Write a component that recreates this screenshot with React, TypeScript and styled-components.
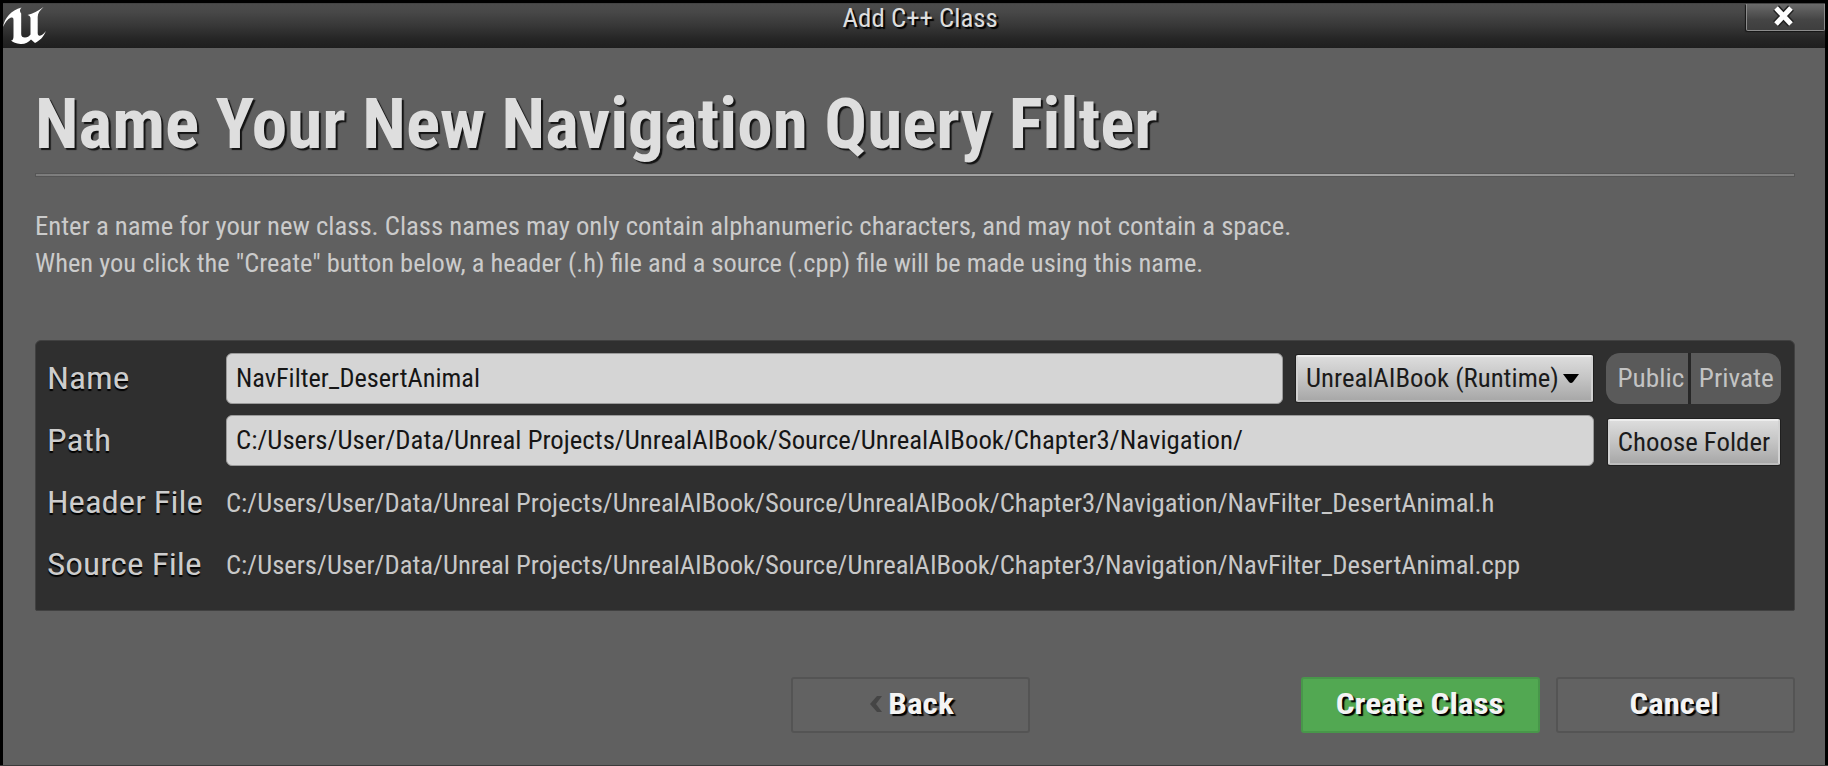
import React from "react";
import styled, { createGlobalStyle, css } from "styled-components";

const GlobalStyle = createGlobalStyle`
  *, *::before, *::after { box-sizing: border-box; }
  html, body { margin: 0; padding: 0; background: #000; }
  body { font-family: "Roboto Condensed", Roboto, "Liberation Sans", sans-serif; font-stretch: 75%; }
  button { font: inherit; margin: 0; }
`;

/* Widens the condensed face a little without changing its height. */
const Wide = styled.span<{ $by: number; $from?: string }>`
  display: inline-block;
  white-space: nowrap;
  transform: scaleX(${(p) => p.$by});
  transform-origin: ${(p) => p.$from ?? "left"} center;
`;

const Frame = styled.div`
  width: 1828px;
  height: 766px;
  padding: 3px 3px 1px;
  background: #000;
  box-shadow: inset 0 -1px #3b3b3b;
  overflow: hidden;
`;

const Dialog = styled.main`
  height: 762px;
  display: flex;
  flex-direction: column;
  background: #606060;
`;

const TitleBar = styled.header`
  height: 44.5px;
  display: grid;
  grid-template-columns: 79px 1fr 79px;
  align-items: start;
  background: linear-gradient(#4b4b4b 0%, #484848 18%, #373737 50%, #252525 80%, #1e1e1e 100%);
  border-top: 1px solid #434343;
`;

const Logo = styled.svg`
  display: block;
  width: 44px;
  height: 42px;
`;

const WindowTitle = styled.h1`
  margin: 0;
  padding-left: 13px;
  text-align: center;
  font-size: 25px;
  font-weight: 400;
  line-height: 29px;
  color: #dedede;
  text-shadow: 2px 2px 1px #000;
`;

const CloseButton = styled.button`
  height: 27px;
  padding: 0 4px 2px 0;
  display: flex;
  align-items: center;
  justify-content: center;
  border: 1px solid #8c8c8c;
  border-top: 0;
  border-radius: 0 0 2px 2px;
  background: linear-gradient(#6a6a6a, #454545 60%, #3e3e3e);
  box-shadow: -1px 1px 1px #161616;
`;

const Content = styled.div`
  flex: 1;
  display: flex;
  flex-direction: column;
  padding: 37px 30px 0 32px;
`;

const Heading = styled.h2`
  margin: 0;
  padding: 0 0 10px 0;
  font-size: 70px;
  font-weight: 700;
  line-height: 78px;
  color: #dedede;
  white-space: nowrap;
  text-shadow: 2px 2px 1px #141414;
`;

const Divider = styled.hr`
  width: 100%;
  height: 4px;
  margin: 0 0 31px;
  border: 1px solid #555;
  background: linear-gradient(90deg, #7c7c7c, #a4a4a4 25%, #a4a4a4 75%, #7c7c7c);
`;

const Intro = styled.p`
  margin: 0;
  font-size: 25px;
  line-height: 37px;
  color: #cbcbcb;
  white-space: nowrap;
`;

const Panel = styled.section`
  height: 271px;
  margin-top: 58px;
  padding: 12px 13px 0 11px;
  display: grid;
  grid-template-columns: 178.5px 1fr;
  grid-template-rows: repeat(4, 62.3px);
  background: #2f2f2f;
  border: 1px solid #414141;
  border-radius: 6px 6px 2px 2px;
`;

const Label = styled.label`
  font-size: 32px;
  line-height: 50px;
  color: #cdcdcd;
  white-space: nowrap;
  text-shadow: 0 2px 1px #000;
`;

const Field = styled.div`
  height: 51px;
  display: flex;
  align-items: center;
  font-size: 25px;
`;

const TextBox = styled.div`
  flex: 1;
  min-width: 0;
  height: 51px;
  padding: 1px 9px 0;
  display: flex;
  align-items: center;
  border: 1px solid #9a9a9a;
  border-radius: 6px;
  background: #d5d5d5;
  color: #161616;
`;

const FilePath = styled.span`
  padding-top: 1px;
  color: #c8c8c8;
  white-space: nowrap;
`;

const raised = css`
  border: 2px solid #d2d2d2;
  border-top-color: #ededed;
  border-bottom-color: #bdbdbd;
  border-radius: 2px;
  background: linear-gradient(#dcdcdc, #c4c4c4 50%, #a8a8a8) padding-box;
  box-shadow: 0 0 0 1px #1f1f1f;
  color: #1b1b1b;
  white-space: nowrap;
`;

const Combo = styled.button`
  ${raised}
  width: 297px;
  height: 47px;
  margin: 1px 13px 0 13px;
  padding: 0 11px 0 8px;
  display: flex;
  align-items: center;
  justify-content: space-between;
`;

const Choose = styled.button`
  ${raised}
  width: 172px;
  height: 46px;
  margin: 3px 1px 0 14px;
  padding: 1px 0 0;
`;

const Segments = styled.div`
  width: 175px;
  height: 51px;
  display: grid;
  grid-template-columns: 82px 90px;
  column-gap: 3px;
  border-radius: 14px;
  background: #272727;
  overflow: hidden;
`;

const Segment = styled.button`
  border: 0;
  background: #5a5a5a;
  color: #c3c3c3;
  text-align: right;
  padding: 1px 4px 0 0;
  &:last-child { padding-right: 7px; }
`;

const Footer = styled.footer`
  margin-top: 66px;
  display: grid;
  grid-template-columns: 494px 239px 239px;
  column-gap: 16px;
  justify-content: end;
`;

const WizardButton = styled.button<{ $primary?: boolean; $back?: boolean }>`
  height: 56px;
  padding: 0 2px 2px 0;
  border: 2px solid ${(p) => (p.$primary ? "#48974a" : "#545454")};
  border-radius: 3px;
  background: ${(p) => (p.$primary ? "#52a852" : "#626262")};
  color: #f4f4f4;
  font-size: 29.5px;
  font-weight: 700;
  text-shadow: 2px 2px 1px #000;
  display: flex;
  align-items: center;
  justify-content: center;
  gap: 9px;
  margin-right: ${(p) => (p.$back ? "255px" : "0")};
`;

const BackChevron = () => (
  <svg width="14" height="18" viewBox="0 0 14 18" aria-hidden="true">
    <path d="M8 1h5L7 9 13 17H8L1 9Z" fill="#454545" />
  </svg>
);

const SOURCE_DIR = "C:/Users/User/Data/Unreal Projects/UnrealAIBook/Source/UnrealAIBook/Chapter3/Navigation/";
const CLASS_NAME = "NavFilter_DesertAnimal";

export default function App() {
  return (
    <Frame>
      <GlobalStyle />
      <Dialog>
        <TitleBar>
          <Logo viewBox="0 0 44 42" aria-hidden="true">
            <path
              fill="#fff"
              d="M0 23C1.500 14 8 6.500 18.500 3.500C16.500 5.500 16.500 7.500 18.200 9.500V30C18.200 32.500 19.500 33.500 22 33.500C24.500 33.500 26 32.500 27.500 30.500V14.500C27.500 12.500 26.500 11.500 24.500 11C30 9.500 35 7 40.500 3C37 6.500 34.700 9 34.700 13V29C34.700 31.500 36 32 37.500 31.500C39.500 31 41 29.500 42.800 27C41 32.500 37 36.500 32 39L28 35.500C25.500 38 22 40.300 17.500 40C13 39.500 10 38.500 8 36.500C10 36.500 10.500 34.500 10.500 32V16C10.500 13.500 9.500 13 7.500 13.800C4.500 15 2.500 18 0 23Z"
            />
          </Logo>
          <WindowTitle>
            <Wide $by={1.075} $from="center">Add C++ Class</Wide>
          </WindowTitle>
          <CloseButton aria-label="Close">
            <svg width="26" height="24" viewBox="0 0 26 24">
              <path d="M5 4 20 20M20 4 5 20" stroke="#222" strokeWidth="8" />
              <path d="M5 4 20 20M20 4 5 20" stroke="#fff" strokeWidth="5" />
            </svg>
          </CloseButton>
        </TitleBar>
        <Content>
          <Heading>
            <Wide $by={1.0175}>Name Your New Navigation Query Filter</Wide>
          </Heading>
          <Divider />
          <Intro>
            <Wide $by={1.0685}>
              Enter a name for your new class. Class names may only contain alphanumeric characters, and may not contain a space.
            </Wide>
          </Intro>
          <Intro>
            <Wide $by={1.058}>
              When you click the "Create" button below, a header (.h) file and a source (.cpp) file will be made using this name.
            </Wide>
          </Intro>
          <Panel>
            <Label><Wide $by={1.11}>Name</Wide></Label>
            <Field>
              <TextBox role="textbox"><Wide $by={1.052}>{CLASS_NAME}</Wide></TextBox>
              <Combo>
                <Wide $by={1.07}>UnrealAIBook (Runtime)</Wide>
                <svg width="18" height="10" viewBox="0 0 18 10" aria-hidden="true">
                  <path d="M1 0H17L11 8Q9 10 7 8Z" fill="#000" />
                </svg>
              </Combo>
              <Segments>
                <Segment><Wide $by={1.09} $from="right">Public</Wide></Segment>
                <Segment><Wide $by={1.09} $from="right">Private</Wide></Segment>
              </Segments>
            </Field>
            <Label><Wide $by={1.11}>Path</Wide></Label>
            <Field>
              <TextBox role="textbox"><Wide $by={1.0707}>{SOURCE_DIR}</Wide></TextBox>
              <Choose><Wide $by={1.073} $from="center">Choose Folder</Wide></Choose>
            </Field>
            <Label><Wide $by={1.088}>Header File</Wide></Label>
            <Field>
              <FilePath><Wide $by={1.065}>{`${SOURCE_DIR}${CLASS_NAME}.h`}</Wide></FilePath>
            </Field>
            <Label><Wide $by={1.105}>Source File</Wide></Label>
            <Field>
              <FilePath><Wide $by={1.065}>{`${SOURCE_DIR}${CLASS_NAME}.cpp`}</Wide></FilePath>
            </Field>
          </Panel>
          <Footer>
            <WizardButton $back>
              <BackChevron />
              <Wide $by={1.125} $from="center">Back</Wide>
            </WizardButton>
            <WizardButton $primary>
              <Wide $by={1.125} $from="center">Create Class</Wide>
            </WizardButton>
            <WizardButton>
              <Wide $by={1.11} $from="center">Cancel</Wide>
            </WizardButton>
          </Footer>
        </Content>
      </Dialog>
    </Frame>
  );
}
